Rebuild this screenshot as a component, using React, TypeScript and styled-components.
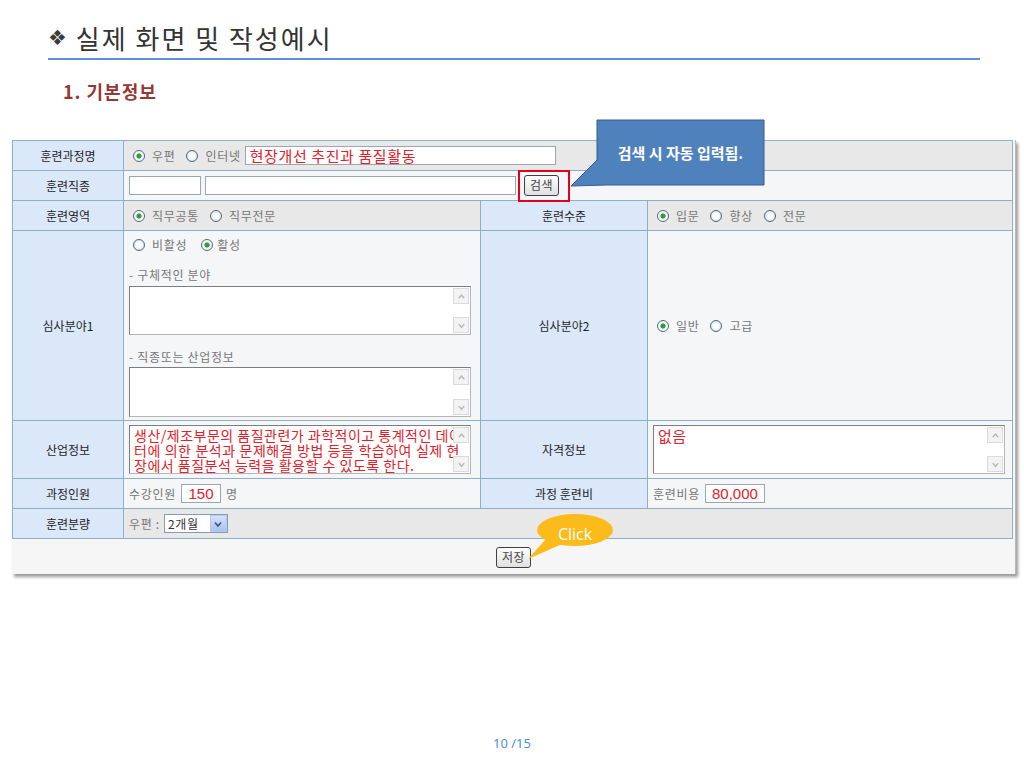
import React from "react";
import styled, { createGlobalStyle } from "styled-components";

const GlobalStyle = createGlobalStyle`
  html, body {
    margin: 0;
    padding: 0;
    background: #fff;
  }
  body {
    font-family: "Noto Sans CJK KR", "Noto Sans", sans-serif;
  }
`;

const Slide = styled.div`
  position: relative;
  width: 1024px;
  height: 768px;
  display: flex;
  flex-direction: column;
  overflow: hidden;
`;

const Heading = styled.h1`
  margin: 21px 0 0 48px;
  display: flex;
  align-items: center;
  gap: 9px;
  font-size: 26px;
  line-height: 34px;
  font-weight: 400;
  letter-spacing: 2px;
  color: #333;
`;

const Bullet = styled.span`
  font-family: "DejaVu Sans", sans-serif;
  font-size: 21px;
  letter-spacing: 0;
  color: #3a3a3a;
`;

const Rule = styled.div`
  height: 2px;
  margin: 3px 44px 0 48px;
  background: #5b8ed8;
`;

const SubHeading = styled.h2`
  margin: 19px 0 0 63px;
  font-size: 18px;
  line-height: 24px;
  font-weight: 700;
  letter-spacing: 1px;
  color: #953735;
`;

const Panel = styled.div`
  margin: 37px 0 0 12px;
  width: 1003px;
  background: #f6f6f6;
  border-right: 1px solid #b8b8b8;
  box-shadow: 2px 3px 3px rgba(0, 0, 0, 0.4);
`;

const FormTable = styled.table`
  width: 1000px;
  border-collapse: collapse;
  table-layout: fixed;
`;

const Row = styled.tr<{ $h: number }>`
  height: ${(p) => p.$h}px;
`;

const LabelCell = styled.th`
  padding: 0;
  border: 1px solid #8eafc6;
  background: #dbe8fa;
  font-size: 12px;
  font-weight: 400;
  color: #1e1e1e;
  text-align: center;
  vertical-align: middle;
`;

const DataCell = styled.td<{ $shade?: boolean; $top?: boolean }>`
  padding: ${(p) => (p.$top ? "4px 5px 0" : "0 5px")};
  border: 1px solid #8eafc6;
  background: ${(p) => (p.$shade ? "#e8e8e8" : "#f5f6f7")};
  font-size: 12px;
  letter-spacing: 0.7px;
  color: #777;
  vertical-align: ${(p) => (p.$top ? "top" : "middle")};
`;

const Line = styled.div<{ $gap?: number }>`
  display: flex;
  align-items: center;
  gap: ${(p) => p.$gap ?? 7}px;
  height: 19px;
`;

const Option = styled.span<{ $gap?: number }>`
  display: inline-flex;
  align-items: center;
  gap: ${(p) => p.$gap ?? 7}px;
`;

const RadioMark = styled.span<{ $on?: boolean }>`
  box-sizing: border-box;
  width: 12px;
  height: 12px;
  margin-left: 4px;
  border-radius: 50%;
  border: 1px solid #4f6479;
  background: ${(p) =>
    p.$on
      ? "radial-gradient(circle, #2e9e3a 0 2.3px, #e9eef2 2.8px, #ffffff 5px)"
      : "radial-gradient(circle, #ffffff 0 2px, #e3e8ec 5px)"};
`;

const Field = styled.input<{ $w: number; $red?: boolean; $center?: boolean; $ml?: number }>`
  box-sizing: border-box;
  width: ${(p) => p.$w}px;
  height: 19px;
  margin: 0 0 0 ${(p) => p.$ml ?? 0}px;
  padding: 0 4px;
  border: 1px solid #9aa7b3;
  background: #fff;
  font-family: ${(p) =>
    p.$center ? '"Liberation Sans", Arial, sans-serif' : '"Noto Sans CJK KR", sans-serif'};
  font-size: 15px;
  letter-spacing: ${(p) => (p.$center ? "0" : "0.6px")};
  color: ${(p) => (p.$red ? "#e3202a" : "#333")};
  text-align: ${(p) => (p.$center ? "center" : "left")};
  outline: none;
`;

const PushButton = styled.button`
  box-sizing: border-box;
  height: 21px;
  margin: 0;
  padding: 0 5px;
  border: 1px solid #3f3f3f;
  border-radius: 3px;
  background: linear-gradient(#fdfdfd, #e0e0e0);
  font-family: "Noto Sans CJK KR", sans-serif;
  font-size: 12px;
  line-height: 18px;
  letter-spacing: 0.5px;
  color: #444;
`;

const Highlight = styled.span`
  display: inline-flex;
  margin: -6px 0 -6px -2px;
  padding: 3px 9px 4px 4px;
  border: 2px solid #e3001b;
`;

const Stack = styled.div`
  display: flex;
  flex-direction: column;
`;

const Caption = styled.div<{ $mt: number }>`
  margin-top: ${(p) => p.$mt}px;
  line-height: 18px;
`;

const TextBox = styled.div<{ $w: number; $h: number; $mt?: number }>`
  position: relative;
  box-sizing: border-box;
  width: ${(p) => p.$w}px;
  height: ${(p) => p.$h}px;
  margin-top: ${(p) => p.$mt ?? 0}px;
  padding: 2px 4px;
  border: 1px solid #7d7d7d;
  border-right-color: #b5b5b5;
  border-bottom-color: #b5b5b5;
  background: #fff;
  overflow: hidden;
`;

const Scroll = styled.div`
  position: absolute;
  top: 1px;
  right: 1px;
  bottom: 1px;
  width: 16px;
  display: flex;
  flex-direction: column;
  justify-content: space-between;
`;

const ArrowBox = styled.span`
  box-sizing: border-box;
  width: 16px;
  height: 16px;
  display: flex;
  align-items: center;
  justify-content: center;
  border: 1px solid #dadada;
  background: #f3f3f3;
`;

const RedText = styled.div<{ $size: number }>`
  font-size: ${(p) => p.$size}px;
  line-height: 15px;
  letter-spacing: 0.5px;
  color: #e3202a;
`;

const JustLine = styled.span<{ $last?: boolean }>`
  display: block;
  width: 326px;
  white-space: nowrap;
  text-align: justify;
  text-align-last: ${(p) => (p.$last ? "left" : "justify")};
`;

const Select = styled.span`
  box-sizing: border-box;
  width: 64px;
  height: 19px;
  display: inline-flex;
  align-items: center;
  justify-content: space-between;
  padding: 0 0 0 3px;
  border: 1px solid #7f9db9;
  background: #fff;
  font-size: 12px;
  color: #333;
`;

const SelectArrow = styled.span`
  box-sizing: border-box;
  width: 17px;
  height: 17px;
  display: flex;
  align-items: center;
  justify-content: center;
  border: 1px solid #b9cbec;
  background: linear-gradient(#d3e2fa, #a9c2ee);
`;

const ButtonBar = styled.div`
  height: 34px;
  display: flex;
  align-items: center;
  justify-content: center;
  padding-top: 1px;
`;

const CalloutShape = styled.svg<{ $x: number; $y: number }>`
  position: absolute;
  left: ${(p) => p.$x}px;
  top: ${(p) => p.$y}px;
  overflow: visible;
`;

const CalloutText = styled.div<{ $x: number; $y: number; $w: number; $h: number }>`
  position: absolute;
  left: ${(p) => p.$x}px;
  top: ${(p) => p.$y}px;
  width: ${(p) => p.$w}px;
  height: ${(p) => p.$h}px;
  display: flex;
  align-items: center;
  justify-content: center;
  color: #fff;
`;

const NoteText = styled.span`
  font-size: 15px;
  font-weight: 700;
`;

const ClickText = styled.span`
  font-family: "Open Sans", "Noto Sans", sans-serif;
  font-size: 16px;
`;

const PageNumber = styled.div`
  margin-top: auto;
  padding-bottom: 16px;
  text-align: center;
  font-family: "Noto Sans", sans-serif;
  font-size: 13px;
  line-height: 18px;
  color: #4a8fd8;
`;

const Chevron: React.FC<{ up?: boolean; color: string; size?: number }> = ({
  up,
  color,
  size = 9,
}) => (
  <svg width={size} height={size} viewBox="0 0 10 10">
    <path
      d={up ? "M2 7 L5 3.5 L8 7" : "M2 3.5 L5 7 L8 3.5"}
      fill="none"
      stroke={color}
      strokeWidth="1.6"
    />
  </svg>
);

const Radio: React.FC<{ on?: boolean; label: string; gap?: number }> = ({
  on,
  label,
  gap,
}) => (
  <Option $gap={gap}>
    <RadioMark $on={on} />
    {label}
  </Option>
);

const Area: React.FC<{ w: number; h: number; mt?: number; children?: React.ReactNode }> = ({
  w,
  h,
  mt,
  children,
}) => (
  <TextBox $w={w} $h={h} $mt={mt}>
    {children}
    <Scroll>
      <ArrowBox>
        <Chevron up color="#b8b8b8" />
      </ArrowBox>
      <ArrowBox>
        <Chevron color="#b8b8b8" />
      </ArrowBox>
    </Scroll>
  </TextBox>
);

const App: React.FC = () => {
  return (
    <Slide>
      <GlobalStyle />
      <Heading>
        <Bullet>❖</Bullet>
        실제 화면 및 작성예시
      </Heading>
      <Rule />
      <SubHeading>1. 기본정보</SubHeading>

      <Panel>
        <FormTable>
          <colgroup>
            <col style={{ width: 111 }} />
            <col style={{ width: 357 }} />
            <col style={{ width: 167 }} />
            <col style={{ width: 365 }} />
          </colgroup>
          <tbody>
            <Row $h={30}>
              <LabelCell>훈련과정명</LabelCell>
              <DataCell colSpan={3} $shade>
                <Line>
                  <Radio on label="우편" />
                  <Radio label="인터넷" />
                  <Field $w={311} $ml={-3} $red readOnly defaultValue="현장개선 추진과 품질활동" />
                </Line>
              </DataCell>
            </Row>
            <Row $h={30}>
              <LabelCell>훈련직종</LabelCell>
              <DataCell colSpan={3}>
                <Line $gap={4}>
                  <Field $w={72} readOnly />
                  <Field $w={311} readOnly />
                  <Highlight>
                    <PushButton>검색</PushButton>
                  </Highlight>
                </Line>
              </DataCell>
            </Row>
            <Row $h={30}>
              <LabelCell>훈련영역</LabelCell>
              <DataCell $shade>
                <Line>
                  <Radio on label="직무공통" />
                  <Radio label="직무전문" />
                </Line>
              </DataCell>
              <LabelCell>훈련수준</LabelCell>
              <DataCell $shade>
                <Line>
                  <Radio on label="입문" />
                  <Radio label="향상" />
                  <Radio label="전문" />
                </Line>
              </DataCell>
            </Row>
            <Row $h={190}>
              <LabelCell>심사분야1</LabelCell>
              <DataCell $top>
                <Stack>
                  <Line $gap={10}>
                    <Radio label="비활성" />
                    <Radio on label="활성" gap={4} />
                  </Line>
                  <Caption $mt={12}>- 구체적인 분야</Caption>
                  <Area w={342} h={49} mt={2} />
                  <Caption $mt={13}>- 직종또는 산업정보</Caption>
                  <Area w={342} h={50} mt={1} />
                </Stack>
              </DataCell>
              <LabelCell>심사분야2</LabelCell>
              <DataCell>
                <Line>
                  <Radio on label="일반" />
                  <Radio label="고급" />
                </Line>
              </DataCell>
            </Row>
            <Row $h={58}>
              <LabelCell>산업정보</LabelCell>
              <DataCell>
                <Area w={342} h={49}>
                  <RedText $size={14}>
                    <JustLine>생산/제조부문의 품질관련가 과학적이고 통계적인 데이</JustLine>
                    <JustLine>터에 의한 분석과 문제해결 방법 등을 학습하여 실제 현</JustLine>
                    <JustLine $last>장에서 품질분석 능력을 활용할 수 있도록 한다.</JustLine>
                  </RedText>
                </Area>
              </DataCell>
              <LabelCell>자격정보</LabelCell>
              <DataCell>
                <Area w={352} h={49}>
                  <RedText $size={15}>없음</RedText>
                </Area>
              </DataCell>
            </Row>
            <Row $h={30}>
              <LabelCell>과정인원</LabelCell>
              <DataCell>
                <Line $gap={5}>
                  수강인원
                  <Field $w={40} $red $center readOnly defaultValue="150" />
                  명
                </Line>
              </DataCell>
              <LabelCell>과정 훈련비</LabelCell>
              <DataCell>
                <Line $gap={5}>
                  훈련비용
                  <Field $w={60} $red $center readOnly defaultValue="80,000" />
                </Line>
              </DataCell>
            </Row>
            <Row $h={30}>
              <LabelCell>훈련분량</LabelCell>
              <DataCell colSpan={3} $shade>
                <Line $gap={4}>
                  우편 :
                  <Select>
                    2개월
                    <SelectArrow>
                      <Chevron color="#3c5284" size={10} />
                    </SelectArrow>
                  </Select>
                </Line>
              </DataCell>
            </Row>
          </tbody>
        </FormTable>
        <ButtonBar>
          <PushButton>저장</PushButton>
        </ButtonBar>
      </Panel>

      <PageNumber>10 /15</PageNumber>

      <CalloutShape $x={565} $y={115} width={205} height={80} viewBox="0 0 205 80">
        <path
          d="M32 5 H199 V70 H42 L6 71 L32 45 Z"
          fill="#4f81bd"
          stroke="#385d8a"
          strokeWidth="1"
        />
      </CalloutShape>
      <CalloutText $x={597} $y={120} $w={167} $h={65}>
        <NoteText>검색 시 자동 입력됨.</NoteText>
      </CalloutText>

      <CalloutShape $x={520} $y={510} width={110} height={55} viewBox="0 0 110 55">
        <ellipse cx="55" cy="20" rx="38" ry="16" fill="#fbbb1b" />
        <path d="M26 29 L8 49 L42 34 Z" fill="#fbbb1b" />
      </CalloutShape>
      <CalloutText $x={537} $y={518} $w={76} $h={32}>
        <ClickText>Click</ClickText>
      </CalloutText>
    </Slide>
  );
};

export default App;
